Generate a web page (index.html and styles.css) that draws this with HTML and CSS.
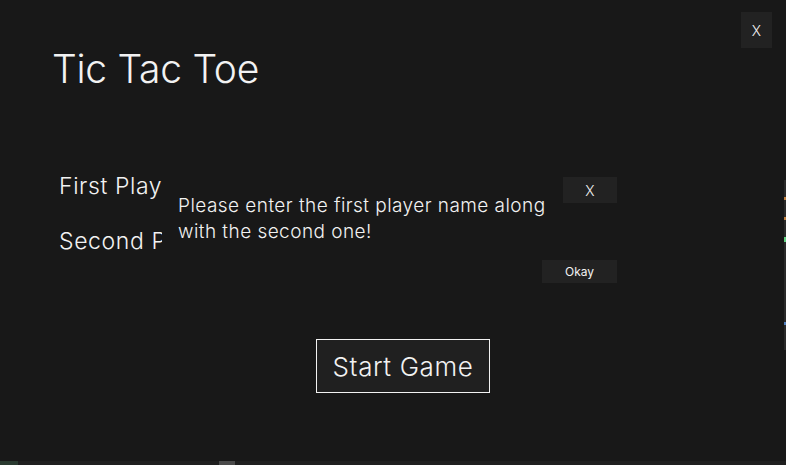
FILE: index.html
```html
<!DOCTYPE html>
<html>
<head>
<meta charset="utf-8">
<link rel="stylesheet" href="styles.css">
</head>
<body>
<div class="app">
  <button class="close-app">X</button>
  <h1 class="title">Tic Tac Toe</h1>
  <div class="form">
    <div class="row"><span class="label">First Player Name</span></div>
    <div class="row"><span class="label">Second Player Name</span></div>
    <div class="modal">
      <div class="modal-head"><button class="modal-x">X</button></div>
      <p class="modal-text">Please enter the first player name along with the second one!</p>
      <div class="modal-foot"><button class="okay">Okay</button></div>
    </div>
  </div>
  <div class="start-wrap"><button class="start">Start Game</button></div>
  <div class="edge"><i></i><i></i><i class="g"></i><i class="b"></i></div>
</div>
<div class="hbar"><span class="leaf"></span><span class="thumb"></span></div>
</body>
</html>
```
FILE: styles.css
```css
html, body {
  margin: 0;
  padding: 0;
  background: #181818;
  color: #f2f2f2;
  font-family: Inter, "Noto Sans", sans-serif;
  width: 786px;
  height: 465px;
  overflow: hidden;
}
.app {
  position: relative;
  height: 461px;
  box-sizing: border-box;
  padding: 0 0 0 52px;
}
button {
  font-family: inherit;
  color: #f2f2f2;
  border: none;
  background: #222222;
  padding: 0;
  cursor: pointer;
}
.close-app {
  position: absolute;
  left: 741px;
  top: 12px;
  width: 31px;
  height: 36px;
  font-size: 14px;
  font-weight: 300;
}
.title {
  margin: 0;
  padding-top: 40px;
  font-size: 39px;
  font-weight: 300;
  line-height: 58px;
  letter-spacing: -0.3px;
}
.form {
  position: relative;
  margin-top: 72px;
  padding-left: 7px;
  width: 570px;
  height: 120px;
}
.row {
  height: 55px;
  font-size: 23px;
  font-weight: 300;
  line-height: 32px;
  letter-spacing: 0.6px;
}
.modal {
  position: absolute;
  left: 110px;
  top: 7px;
  width: 455px;
  height: 120px;
  background: #181818;
  box-sizing: border-box;
  padding: 0 0 0 16px;
}
.modal-head {
  display: flex;
  justify-content: flex-end;
}
.modal-x {
  width: 54px;
  height: 26px;
  font-size: 14px;
  font-weight: 300;
}
.modal-text {
  margin: -10px 0 0 0;
  font-size: 19px;
  line-height: 26px;
  font-weight: 300;
  letter-spacing: 0.45px;
  width: 385px;
}
.modal-foot {
  display: flex;
  justify-content: flex-end;
  margin-top: 15px;
}
.okay {
  width: 75px;
  height: 23px;
  font-size: 12px;
}
.start-wrap {
  display: flex;
  padding-left: 264px;
  margin-top: 49px;
}
.start {
  width: 174px;
  height: 54px;
  border: 1px solid #f2f2f2;
  background: #202020;
  font-size: 26px;
  font-weight: 300;
  letter-spacing: 0.6px;
}
.edge {
  position: absolute;
  left: 784px;
  top: 180px;
  width: 2px;
  height: 170px;
  background: #2a2a2a;
}
.edge i {
  display: block;
  height: 3px;
  margin-top: 17px;
  background: #c08040;
}
.edge i.g { background: #60d080; height: 5px; }
.edge i.b { background: #5080c0; margin-top: 80px; }
.hbar {
  position: relative;
  height: 4px;
  background: #1f1f1f;
}
.leaf {
  position: absolute;
  left: 0;
  top: 0;
  width: 18px;
  height: 4px;
  background: #2a3a30;
}
.thumb {
  position: absolute;
  left: 219px;
  top: 0;
  width: 16px;
  height: 4px;
  background: #4a4a4a;
}
```
